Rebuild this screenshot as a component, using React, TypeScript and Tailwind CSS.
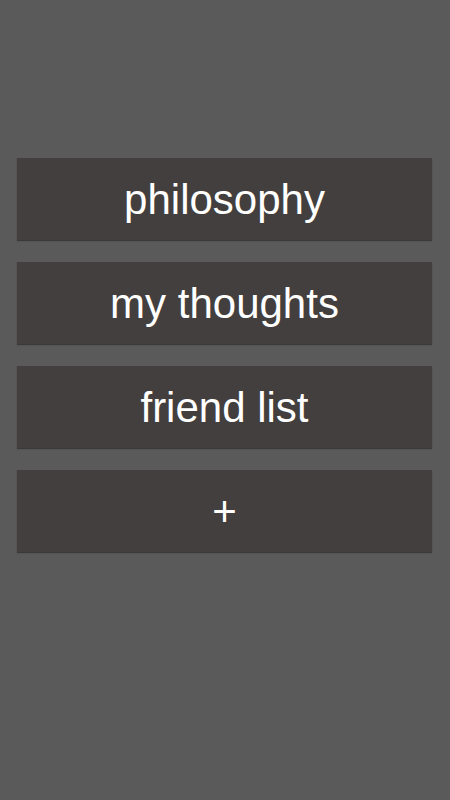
const items = ['philosophy', 'my thoughts', 'friend list', '+'];

export default function App() {
  return (
    <div className="min-h-[800px] w-full bg-[#5a5a5a] px-[17px] pt-[158px] font-['Liberation_Sans',Arial,sans-serif]">
      <div className="flex flex-col gap-[22px]">
        {items.map((label) => (
          <button
            key={label}
            className="flex h-[82px] w-[415px] items-center justify-center bg-[#433f3e] pt-[2px] text-[42px] leading-none text-white shadow-[0_1px_1px_rgba(0,0,0,0.35)]"
          >
            {label}
          </button>
        ))}
      </div>
    </div>
  );
}
